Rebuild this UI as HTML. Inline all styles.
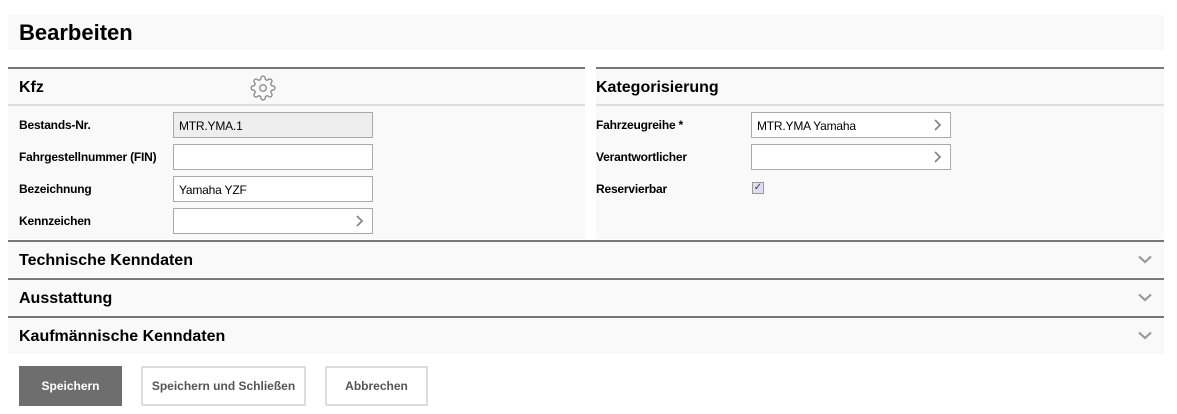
<!DOCTYPE html>
<html><head><meta charset="utf-8"><style>
*{box-sizing:border-box;margin:0;padding:0}
body{width:1177px;height:414px;background:#fff;font-family:"Liberation Sans",Arial,sans-serif;color:#000;position:relative;overflow:hidden}
.a{position:absolute}
.bg{background:#f9f9f9}
.lbl{position:absolute;font-size:12px;font-weight:bold;letter-spacing:-0.2px}
.inp{position:absolute;width:200px;height:26px;border:1px solid #a9a9a9;background:#fff;font-size:12px;padding:6px 0 0 5px;letter-spacing:-0.2px}
.chev{position:absolute;right:8px;top:5px}
.h{position:absolute;font-size:16px;font-weight:bold}
.btn{position:absolute;top:366px;height:40px;font-size:12px;font-weight:bold;text-align:center;line-height:40px}
</style></head><body>
<div class="a bg" style="left:8px;top:15px;width:1156px;height:35px"></div>
<div class="a" style="left:19px;top:20px;font-size:22px;font-weight:bold">Bearbeiten</div>

<div class="a bg" style="left:8px;top:67px;width:577px;height:172px;border-top:2px solid #777"></div>
<div class="a" style="left:8px;top:104px;width:577px;height:2px;background:#ddd"></div>
<div class="h" style="left:19px;top:79px">Kfz</div>
<svg class="a" style="left:250px;top:75px" width="26" height="26" viewBox="0 0 24 24" fill="none" stroke="#888" stroke-width="1.2"><circle cx="12" cy="12" r="3"/><path d="M19.4 15a1.65 1.65 0 0 0 .33 1.82l.06.06a2 2 0 1 1-2.83 2.83l-.06-.06a1.65 1.65 0 0 0-1.82-.33 1.65 1.65 0 0 0-1 1.51V21a2 2 0 1 1-4 0v-.09A1.65 1.65 0 0 0 9 19.4a1.65 1.65 0 0 0-1.82.33l-.06.06a2 2 0 1 1-2.83-2.83l.06-.06A1.65 1.65 0 0 0 4.6 15a1.65 1.65 0 0 0-1.51-1H3a2 2 0 1 1 0-4h.09A1.65 1.65 0 0 0 4.6 9a1.65 1.65 0 0 0-.33-1.82l-.06-.06a2 2 0 1 1 2.83-2.83l.06.06A1.65 1.65 0 0 0 9 4.6a1.65 1.65 0 0 0 1-1.51V3a2 2 0 1 1 4 0v.09a1.65 1.65 0 0 0 1 1.51 1.65 1.65 0 0 0 1.82-.33l.06-.06a2 2 0 1 1 2.83 2.83l-.06.06A1.65 1.65 0 0 0 19.4 9a1.65 1.65 0 0 0 1.51 1H21a2 2 0 1 1 0 4h-.09a1.65 1.65 0 0 0-1.51 1z"/></svg>
<div class="lbl" style="left:19px;top:118px">Bestands-Nr.</div>
<div class="inp" style="left:173px;top:112px;background:#eee">MTR.YMA.1</div>
<div class="lbl" style="left:19px;top:150px">Fahrgestellnummer (FIN)</div>
<div class="inp" style="left:173px;top:144px"></div>
<div class="lbl" style="left:19px;top:182px">Bezeichnung</div>
<div class="inp" style="left:173px;top:176px">Yamaha YZF</div>
<div class="lbl" style="left:19px;top:214px">Kennzeichen</div>
<div class="inp" style="left:173px;top:208px"><svg class="chev" width="8" height="14"><path d="M1 2l5 5-5 5" stroke="#888" stroke-width="1.8" fill="none"/></svg></div>

<div class="a bg" style="left:596px;top:67px;width:568px;height:172px;border-top:2px solid #777"></div>
<div class="a" style="left:596px;top:104px;width:568px;height:2px;background:#ddd"></div>
<div class="h" style="left:596px;top:79px">Kategorisierung</div>
<div class="lbl" style="left:596px;top:118px">Fahrzeugreihe *</div>
<div class="inp" style="left:751px;top:112px">MTR.YMA Yamaha<svg class="chev" width="8" height="14"><path d="M1 2l5 5-5 5" stroke="#888" stroke-width="1.8" fill="none"/></svg></div>
<div class="lbl" style="left:596px;top:150px">Verantwortlicher</div>
<div class="inp" style="left:751px;top:144px"><svg class="chev" width="8" height="14"><path d="M1 2l5 5-5 5" stroke="#888" stroke-width="1.8" fill="none"/></svg></div>
<div class="lbl" style="left:596px;top:182px">Reservierbar</div>
<div class="a" style="left:752px;top:182px;width:12px;height:12px;border:1px solid #999;background:#dde;font-size:10px;line-height:10px;text-align:center;color:#336">✓</div>

<div class="a bg" style="left:8px;top:240px;width:1156px;height:37px;border-top:2px solid #777"></div>
<div class="h" style="left:19px;top:252px">Technische Kenndaten</div>
<div class="a bg" style="left:8px;top:278px;width:1156px;height:38px;border-top:2px solid #777"></div>
<div class="h" style="left:19px;top:290px">Ausstattung</div>
<div class="a bg" style="left:8px;top:316px;width:1156px;height:38px;border-top:2px solid #777"></div>
<div class="h" style="left:19px;top:328px">Kaufmännische Kenndaten</div>
<svg class="a" style="left:1138px;top:255px" width="14" height="9"><path d="M1 1.5l6 5.5 6-5.5" stroke="#999" stroke-width="2.2" fill="none"/></svg>
<svg class="a" style="left:1138px;top:293px" width="14" height="9"><path d="M1 1.5l6 5.5 6-5.5" stroke="#999" stroke-width="2.2" fill="none"/></svg>
<svg class="a" style="left:1138px;top:331px" width="14" height="9"><path d="M1 1.5l6 5.5 6-5.5" stroke="#999" stroke-width="2.2" fill="none"/></svg>

<div class="btn" style="left:19px;width:103px;background:#6e6e6e;color:#fff">Speichern</div>
<div class="btn" style="left:141px;width:165px;border:2px solid #ddd;line-height:36px;color:#555">Speichern und Schließen</div>
<div class="btn" style="left:325px;width:103px;border:2px solid #ddd;line-height:36px;color:#555">Abbrechen</div>
</body></html>
